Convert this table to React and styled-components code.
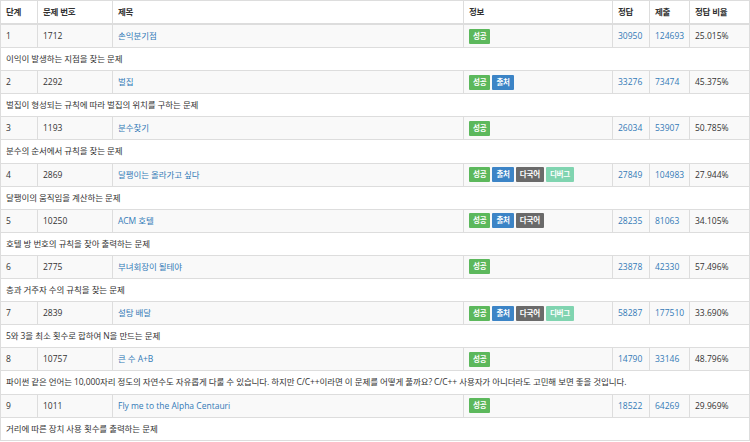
import React from 'react';
import styled, { createGlobalStyle } from 'styled-components';

const GlobalStyle = createGlobalStyle`
  body {
    margin: 0;
    background: #fff;
    font-family: "Open Sans", "Noto Sans CJK KR", sans-serif;
    font-size: 8.5px;
    color: #333;
  }
`;

const Table = styled.table`
  width: 749px;
  table-layout: fixed;
  border-collapse: collapse;
  border: 1px solid #ddd;
`;

const HeadCell = styled.th`
  text-align: left;
  font-weight: 700;
  padding: 5px 5px;
  line-height: 12px;
  border: 1px solid #ddd;
  border-bottom: 2px solid #ddd;
  white-space: nowrap;
  letter-spacing: -0.2px;
`;

const Row = styled.tr`
  background: ${(p) => (p.$striped ? '#f9f9f9' : '#fff')};
`;

const Cell = styled.td`
  padding: 5px 5px;
  line-height: 12.1px;
  border: 1px solid #ddd;
  vertical-align: middle;
  white-space: nowrap;
  overflow: hidden;
  letter-spacing: ${(p) => (p.$ko ? '-0.1px' : '0')};
`;

const Link = styled.a`
  color: #337ab7;
  text-decoration: none;
`;

const Badges = styled.div`
  display: flex;
  gap: 2px;
  margin: -2px 0;
`;

const badgeColors = {
  성공: '#5cb85c',
  출처: '#3c84c6',
  다국어: '#6a6a6a',
  디버그: '#80d4b0',
};

const Badge = styled.span`
  display: inline-block;
  background: ${(p) => p.$color};
  color: #fff;
  font-size: 7.5px;
  font-weight: 700;
  line-height: 13px;
  padding: 1px 4px;
  border-radius: 1px;
  letter-spacing: -0.2px;
`;

const problems = [
  { step: 1, id: 1712, title: '손익분기점', tags: ['성공'], ac: 30950, sub: 124693, rate: '25.015%', desc: '이익이 발생하는 지점을 찾는 문제' },
  { step: 2, id: 2292, title: '벌집', tags: ['성공', '출처'], ac: 33276, sub: 73474, rate: '45.375%', desc: '벌집이 형성되는 규칙에 따라 벌집의 위치를 구하는 문제' },
  { step: 3, id: 1193, title: '분수찾기', tags: ['성공'], ac: 26034, sub: 53907, rate: '50.785%', desc: '분수의 순서에서 규칙을 찾는 문제' },
  { step: 4, id: 2869, title: '달팽이는 올라가고 싶다', tags: ['성공', '출처', '다국어', '디버그'], ac: 27849, sub: 104983, rate: '27.944%', desc: '달팽이의 움직임을 계산하는 문제' },
  { step: 5, id: 10250, title: 'ACM 호텔', tags: ['성공', '출처', '다국어'], ac: 28235, sub: 81063, rate: '34.105%', desc: '호텔 방 번호의 규칙을 찾아 출력하는 문제' },
  { step: 6, id: 2775, title: '부녀회장이 될테야', tags: ['성공'], ac: 23878, sub: 42330, rate: '57.496%', desc: '층과 거주자 수의 규칙을 찾는 문제' },
  { step: 7, id: 2839, title: '설탕 배달', tags: ['성공', '출처', '다국어', '디버그'], ac: 58287, sub: 177510, rate: '33.690%', desc: '5와 3을 최소 횟수로 합하여 N을 만드는 문제' },
  { step: 8, id: 10757, title: '큰 수 A+B', tags: ['성공'], ac: 14790, sub: 33146, rate: '48.796%', desc: '파이썬 같은 언어는 10,000자리 정도의 자연수도 자유롭게 다룰 수 있습니다. 하지만 C/C++이라면 이 문제를 어떻게 풀까요? C/C++ 사용자가 아니더라도 고민해 보면 좋을 것입니다.' },
  { step: 9, id: 1011, title: 'Fly me to the Alpha Centauri', tags: ['성공'], ac: 18522, sub: 64269, rate: '29.969%', desc: '거리에 따른 장치 사용 횟수를 출력하는 문제' },
];

const hasKorean = (s) => /[가-힣]/.test(s);

const widths = [37, 75, 351, 149, 37, 40, 60];

export default function App() {
  return (
    <>
      <GlobalStyle />
      <Table>
        <colgroup>
          {widths.map((w, i) => (
            <col key={i} style={{ width: w }} />
          ))}
        </colgroup>
        <thead>
          <tr>
            <HeadCell>단계</HeadCell>
            <HeadCell>문제 번호</HeadCell>
            <HeadCell>제목</HeadCell>
            <HeadCell>정보</HeadCell>
            <HeadCell>정답</HeadCell>
            <HeadCell>제출</HeadCell>
            <HeadCell>정답 비율</HeadCell>
          </tr>
        </thead>
        <tbody>
          {problems.map((p) => (
            <React.Fragment key={p.id}>
              <Row $striped>
                <Cell>{p.step}</Cell>
                <Cell>{p.id}</Cell>
                <Cell $ko={hasKorean(p.title)}><Link href="#">{p.title}</Link></Cell>
                <Cell>
                  <Badges>
                    {p.tags.map((t) => (
                      <Badge key={t} $color={badgeColors[t]}>{t}</Badge>
                    ))}
                  </Badges>
                </Cell>
                <Cell><Link href="#">{p.ac}</Link></Cell>
                <Cell><Link href="#">{p.sub}</Link></Cell>
                <Cell>{p.rate}</Cell>
              </Row>
              <Row>
                <Cell colSpan={7} $ko>{p.desc}</Cell>
              </Row>
            </React.Fragment>
          ))}
        </tbody>
      </Table>
    </>
  );
}
